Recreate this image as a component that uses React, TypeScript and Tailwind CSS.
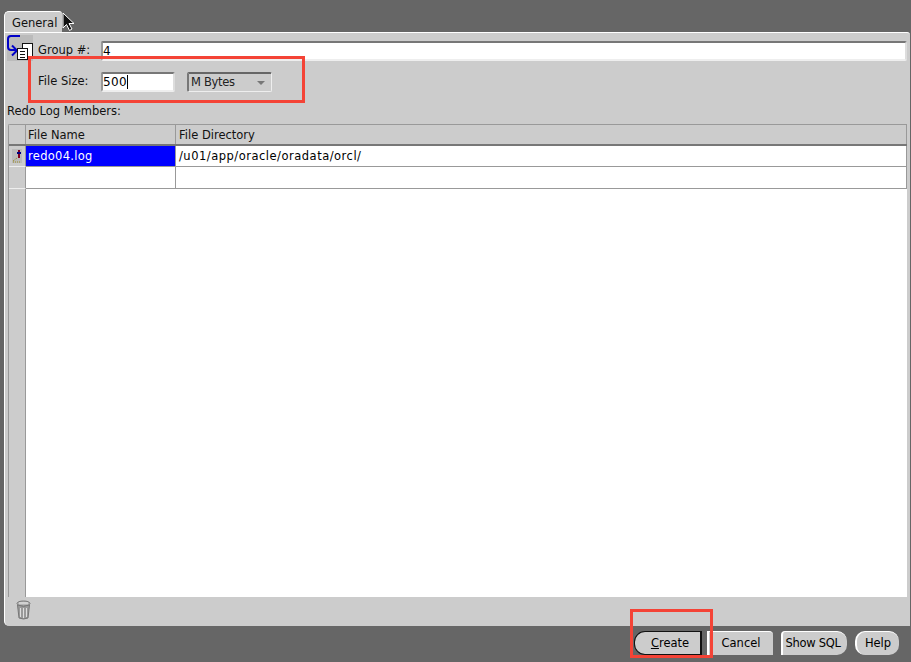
import React from "react";

const font = { fontFamily: '"DejaVu Sans", sans-serif' };

const Field: React.FC<{ className?: string; children?: React.ReactNode }> = ({ className, children }) => (
  <div
    className={`h-[20px] bg-white border-2 border-t-[#777] border-l-[#999] border-r-[#ddd] border-b-[#eee] rounded-[2px] flex items-center text-[12px] leading-none text-black ${className ?? ""}`}
  >
    {children}
  </div>
);

const FootButton: React.FC<{ className: string; children: React.ReactNode }> = ({ className, children }) => (
  <button className={`h-[24px] bg-[#ccc] text-[11.5px] text-black flex items-center justify-center pt-[1px] ${className}`}>
    {children}
  </button>
);

export default function App() {
  return (
    <div
      className="relative w-[911px] h-[662px] overflow-hidden bg-[#666] flex flex-col pt-[11px] pl-[4px] text-[11.5px] text-[#111]"
      style={font}
    >
      {/* tab */}
      <div className="w-[58px] h-[21px] bg-[#ccc] border-t border-l border-white rounded-tl-[5px] rounded-tr-[3px] pl-[7px] pt-[4px] leading-[14px] shrink-0">
        General
      </div>

      {/* main panel */}
      <div className="w-[906px] h-[594px] shrink-0 bg-[#ccc] border-t border-l border-white rounded-bl-[5px] rounded-tr-[3px] flex flex-col">
        {/* group row */}
        <div className="flex items-center h-[20px] mt-[8px] shrink-0">
          <svg width="26" height="26" viewBox="0 0 26 26" className="ml-[2px] -mt-[6px] shrink-0 bg-[#bbb]">
            <path d="M13 1H4Q1 1 1 4V12Q1 15 4 15H9" fill="none" stroke="#0000c8" strokeWidth="2" />
            <path d="M5 10.5L10 15.5L5 20.5" fill="none" stroke="#0000c8" strokeWidth="2" />
            <rect x="15.5" y="8.5" width="10" height="13" fill="#fff" stroke="#111" />
            <rect x="10.5" y="13.5" width="10" height="11" fill="#fff" stroke="#111" />
            <path d="M13 16.5H18M13 19.5H18M13 22.5H18" stroke="#111" />
          </svg>
          <span className="ml-[5px] w-[63px] shrink-0">Group #:</span>
          <Field className="w-[806px]">4</Field>
        </div>

        {/* file size row */}
        <div className="flex items-center h-[20px] mt-[11px] shrink-0">
          <span className="ml-[33px] w-[63px] shrink-0">File Size:</span>
          <Field className="w-[74px]">
            <span className="tracking-[0.4px]">500</span>
            <span className="w-px h-[14px] bg-black" />
          </Field>
          <div className="ml-[12px] w-[85px] h-[20px] bg-[#ccc] border border-t-2 border-l-2 border-t-[#666] border-l-[#777] border-r-[#eee] border-b-[#eee] rounded-[2px] flex items-center justify-between pl-[2px] pr-[6px] text-[#222]">
            <span className="whitespace-pre tracking-[-0.3px]">M Bytes</span>
            <span className="w-0 h-0 border-x-[4px] border-x-transparent border-t-[4px] border-t-[#777]" />
          </div>
        </div>

        <div className="ml-[2px] mt-[11px] h-[16px] leading-[16px] shrink-0">Redo Log Members:</div>

        {/* table */}
        <div className="ml-[3px] mt-[5px] w-[899px] h-[473px] shrink-0 flex flex-col border-l border-t border-[#999] bg-white rounded-tl-[2px]">
          <div className="flex h-[21px] shrink-0 bg-[#ccc] border-b-2 border-[#777]">
            <div className="w-[17px] border-r border-[#999] shrink-0" />
            <div className="w-[150px] border-r border-[#999] shrink-0 pl-[2px] leading-[21px]">File Name</div>
            <div className="flex-1 border-r border-[#999] pl-[3px] leading-[21px]">File Directory</div>
          </div>
          <div className="flex h-[21px] shrink-0">
            <div className="w-[17px] bg-[#ccc] border-r border-b border-r-[#999] border-b-[#eee] shrink-0 flex items-center justify-center">
              <svg width="10" height="14" viewBox="0 0 10 14">
                <rect width="10" height="14" fill="#bbb" />
                <path d="M7 1V9" stroke="#800020" strokeWidth="2" />
                <path d="M5 4H9" stroke="#000080" strokeWidth="2" />
                <path d="M1 12L5 9M1 13H8" stroke="#9a8a20" strokeDasharray="1 1" />
              </svg>
            </div>
            <div className="w-[150px] bg-[#0000ff] text-white border-r border-b border-[#999] shrink-0 pl-[2px] leading-[21px] tracking-[0.3px]">
              redo04.log
            </div>
            <div className="flex-1 border-r border-b border-[#999] pl-[3px] leading-[21px] text-black tracking-[0.5px]">
              /u01/app/oracle/oradata/orcl/
            </div>
          </div>
          <div className="flex h-[22px] shrink-0">
            <div className="w-[17px] bg-[#ccc] border-r border-b border-r-[#999] border-b-[#eee] shrink-0" />
            <div className="w-[150px] border-r border-b border-[#999] shrink-0" />
            <div className="flex-1 border-r border-b border-[#999]" />
          </div>
          <div className="flex-1 flex min-h-0">
            <div className="w-[17px] bg-[#ccc] border-r border-[#999] shrink-0" />
          </div>
        </div>

        {/* trash */}
        <div className="h-[29px] shrink-0 pl-[11px] pt-[3px]">
          <svg width="15" height="20" viewBox="0 0 15 20">
            <ellipse cx="7.5" cy="3.5" rx="6.5" ry="2.5" fill="#b4b4b4" stroke="#777" />
            <path d="M1.5 5L3 18Q7.5 20 12 18L13.5 5Q7.5 8 1.5 5Z" fill="#999" stroke="#777" />
            <path d="M4.5 8V17M7.5 8V18M10.5 8V17" stroke="#ddd" />
            <path d="M3 3H12" stroke="#eee" />
          </svg>
        </div>
      </div>

      {/* bottom buttons */}
      <div className="flex items-start pl-[630px] pt-[5px] text-black">
        <FootButton className="w-[68px] rounded-l-[11px] border border-r-2 border-[#111]">
          <span className="pl-[5px]"><span className="underline">C</span>reate</span>
        </FootButton>
        <FootButton className="w-[66px] ml-[5px] border-l-2 border-t border-white rounded-tr-[4px]">Cancel</FootButton>
        <FootButton className="w-[66px] ml-[8px] pr-[4px] border-l-2 border-t border-white rounded-r-[10px] rounded-tl-[4px] whitespace-nowrap tracking-[-0.3px]">Show SQL</FootButton>
        <FootButton className="w-[44px] ml-[8px] border-l-2 border-t border-white rounded-[10px]">Help</FootButton>
      </div>

      {/* mouse cursor */}
      <svg width="14" height="20" viewBox="0 0 14 20" className="absolute left-[62px] top-[12px]">
        <path d="M1 1V16L4.5 12.5L7.5 18.5L10 17L7 11.5H12Z" fill="#111" stroke="#fff" />
      </svg>

      {/* red annotation boxes */}
      <div className="absolute left-[28px] top-[56px] w-[277px] h-[47px] border-[3px] border-[#f44336]" />
      <div className="absolute left-[630px] top-[609px] w-[83px] h-[49px] border-[3px] border-[#f44336]" />
    </div>
  );
}
